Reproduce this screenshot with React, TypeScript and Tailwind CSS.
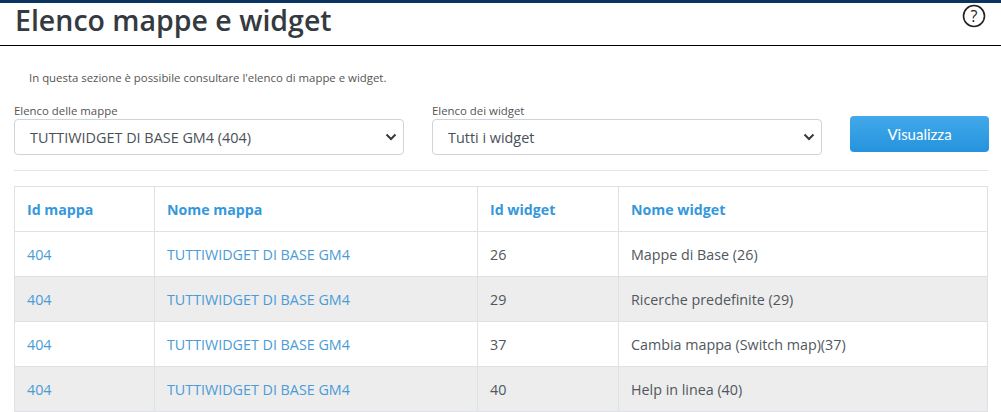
const rows = [
  { id: "26", name: "Mappe di Base (26)" },
  { id: "29", name: "Ricerche predefinite (29)" },
  { id: "37", name: "Cambia mappa (Switch map)(37)" },
  { id: "40", name: "Help in linea (40)" },
];

function Chevron() {
  return (
    <svg width="12" height="8" viewBox="0 0 12 8" className="shrink-0">
      <path d="M1.5 1.5 6 6l4.5-4.5" fill="none" stroke="#343a40" strokeWidth="2" />
    </svg>
  );
}

function FakeSelect({ label, value }: { label: string; value: string }) {
  return (
    <div className="w-[390px] shrink-0">
      <div className="text-[11.4px] leading-[14px] text-[#555] mb-[1px]">{label}</div>
      <div className="h-[36px] flex items-center justify-between pl-[15px] pr-[6px] bg-white border border-[#ced4da] rounded-[4px] text-[14.4px] text-[#495057]">
        <span className="pt-[1px]">{value}</span>
        <Chevron />
      </div>
    </div>
  );
}

export default function App() {
  return (
    <div className="w-[1001px] h-[412px] overflow-hidden bg-white font-['Open_Sans',sans-serif] text-[#50575e]">
      <div className="h-[3px] bg-[#0b3460]" />
      <header className="h-[43px] border-b border-black flex justify-between pl-[15px] pr-[15px]">
        <h1 className="text-[28.5px] leading-[34px] font-semibold text-[#343a40]">Elenco mappe e widget</h1>
        <svg width="24" height="24" viewBox="0 0 24 24" className="mt-[1px]">
          <circle cx="12" cy="12" r="10.5" fill="none" stroke="#222" strokeWidth="1.6" />
          <text x="12" y="17.5" textAnchor="middle" fontSize="16" fill="#222" fontFamily="Open Sans, sans-serif">?</text>
        </svg>
      </header>
      <main className="pl-[14px] pr-[13px]">
        <p className="pl-[15px] pt-[24px] text-[11.4px] leading-[15px] text-[#555]">
          In questa sezione è possibile consultare l'elenco di mappe e widget.
        </p>
        <div className="flex items-start mt-[19px] pb-[15px] border-b border-[#e5e5e5]">
          <FakeSelect label="Elenco delle mappe" value="TUTTIWIDGET DI BASE GM4 (404)" />
          <div className="ml-[28px] shrink-0">
            <FakeSelect label="Elenco dei widget" value="Tutti i widget" />
          </div>
          <button className="ml-[28px] mt-[12px] w-[139px] h-[36px] shrink-0 rounded-[4px] bg-gradient-to-b from-[#42a9ea] to-[#2493dd] text-white text-[15px] font-['Lato',sans-serif]">
            Visualizza
          </button>
        </div>
        <table className="mt-[15px] w-[974px] table-fixed border-collapse text-[14.3px]">
          <colgroup>
            <col className="w-[140px]" />
            <col className="w-[323px]" />
            <col className="w-[141px]" />
            <col />
          </colgroup>
          <thead>
            <tr className="h-[45px] text-left text-[14.2px] text-[#3498db] font-bold">
              <th className="border border-[#dee2e6] pl-[12px] pt-[1px]">Id mappa</th>
              <th className="border border-[#dee2e6] pl-[12px] pt-[1px]">Nome mappa</th>
              <th className="border border-[#dee2e6] pl-[12px] pt-[1px]">Id widget</th>
              <th className="border border-[#dee2e6] pl-[12px] pt-[1px]">Nome widget</th>
            </tr>
          </thead>
          <tbody>
            {rows.map((row, index) => (
              <tr key={row.id} className={"h-[45px] " + (index % 2 === 1 ? "bg-[#ededed]" : "bg-white")}>
                <td className="border border-[#dee2e6] pl-[12px] pt-[2px] text-[#4a9bd6]">404</td>
                <td className="border border-[#dee2e6] pl-[12px] pt-[2px] text-[#4a9bd6]">TUTTIWIDGET DI BASE GM4</td>
                <td className="border border-[#dee2e6] pl-[12px] pt-[2px]">{row.id}</td>
                <td className="border border-[#dee2e6] pl-[12px] pt-[2px]">{row.name}</td>
              </tr>
            ))}
          </tbody>
        </table>
      </main>
    </div>
  );
}
